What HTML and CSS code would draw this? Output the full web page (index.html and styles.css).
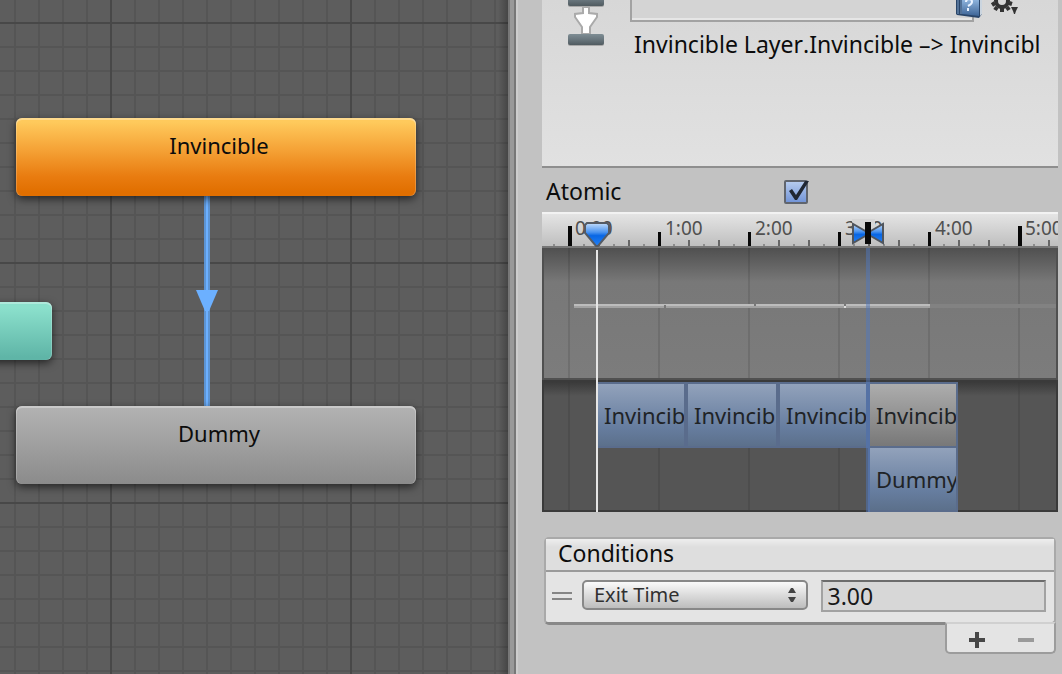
FILE: index.html
```html
<!DOCTYPE html>
<html lang="en">
<head>
<meta charset="utf-8">
<title>Animator</title>
<link rel="stylesheet" href="styles.css">
</head>
<body>
<main class="editor">
  <section class="graph" aria-label="State graph">
    <svg class="edge" width="22" height="212" viewBox="0 0 22 212" aria-hidden="true">
      <rect x="8" width="6" height="212" fill="#5d94d3"/>
      <rect x="10" width="2" height="212" fill="#6cb0ff"/>
      <path d="M0 94H22L13 115H9Z" fill="#6cb0ff"/>
    </svg>
    <div class="node node-any"></div>
    <div class="node node-default">Invincible</div>
    <div class="node node-state">Dummy</div>
  </section>

  <aside class="inspector">
    <header class="header">
      <svg class="transition-icon" width="40" height="48" viewBox="0 0 40 48" aria-hidden="true">
        <defs>
          <linearGradient id="bar" x2="0" y2="1"><stop stop-color="#7e8d94"/><stop offset=".5" stop-color="#69767d"/><stop offset="1" stop-color="#505b60"/></linearGradient>
        </defs>
        <rect x="2" y="-4" width="36" height="11" rx="2" fill="#777" opacity=".5"/>
        <rect x="2" y="-6" width="36" height="12" rx="2" fill="url(#bar)"/>
        <path d="M17 7V13L9 14V17L16 27V34H24V27L31 17V14L23 13V7Z" fill="#fff" stroke="#aaa" stroke-width="2"/>
        <rect x="2" y="36" width="36" height="10" rx="2" fill="#777" opacity=".5"/>
        <rect x="2" y="34" width="36" height="11" rx="2" fill="url(#bar)"/>
      </svg>
      <div class="header-main">
        <div class="name-row">
          <input class="name" type="text" aria-label="Transition name">
          <svg class="tools" width="66" height="22" viewBox="0 0 66 22" aria-hidden="true">
            <defs>
              <linearGradient id="book" x2="0" y2="1"><stop stop-color="#8db3dc"/><stop offset="1" stop-color="#3d6496"/></linearGradient>
            </defs>
            <path d="M3 0H29V14L26 18L4 15L3 14Z" fill="#294569"/>
            <path d="M9 0H26V16L9 14Z" fill="url(#book)"/>
            <path d="M5 0V14M8 0V14" stroke="#7fa0c7" stroke-width="1"/>
            <path d="M27 0H29V14L27 16Z" fill="#cbd5df"/>
            <path d="M13 2Q13 -1 16 -1T19 2Q19 4 15 6M15 8V11" fill="none" stroke="#e8f2ff" stroke-width="2"/>
            <circle cx="49" cy="1" r="6" fill="none" stroke="#333" stroke-width="4"/>
            <path d="M42 3L39 5M44 7L42 10M49 8V12M54 7L56 10M56 3L59 4" stroke="#333" stroke-width="4"/>
            <path d="M58 7H65L63 11L62 14H61L60 11Z" fill="#333"/>
          </svg>
        </div>
        <div class="title">Invincible Layer.Invincible –&gt; Invincible</div>
      </div>
    </header>

    <div class="property">
      <label for="atomic">Atomic</label>
      <span class="check">
        <input type="checkbox" id="atomic" checked>
        <svg width="28" height="26" viewBox="0 0 28 26" aria-hidden="true"><path d="M5 11L8 9L12 15L21 1H25L13 20H11Z" fill="#202733"/></svg>
      </span>
    </div>

    <div class="timeline">
      <div class="ruler">
        <div class="times"><span>0:00</span><span>1:00</span><span>2:00</span><span>3:00</span><span>4:00</span><span>5:00</span></div>
        <svg class="ticks" width="100%" height="34" aria-hidden="true">
          <defs>
            <pattern id="tick" x="24" width="90" height="34" patternUnits="userSpaceOnUse">
              <path d="M2 20H5V34H2Z" fill="#080808"/>
              <path d="M32 28h2v6h-2zM62 28h2v6h-2z" fill="#666"/>
              <path d="M17 32h2v2h-2zM47 32h2v2h-2zM77 32h2v2h-2z" fill="#8c8c8c"/>
            </pattern>
          </defs>
          <rect width="100%" height="34" fill="url(#tick)"/>
          <path d="M26 14h4v20h-4zM476 14h4v20h-4z" fill="#080808"/>
        </svg>
      </div>
      <div class="curve">
        <svg width="100%" height="130" aria-hidden="true">
          <path d="M384 58H516" stroke="#828282" stroke-width="4"/>
          <path d="M32 57H388" stroke="#bcbcbc" stroke-width="2"/>
          <path d="M32 59H388" stroke="#a2a2a2" stroke-width="2"/>
          <path d="M123 57v3M213 56v2" stroke="#777" stroke-width="2"/>
          <path d="M303 56v2" stroke="#777" stroke-width="2"/>
          <path d="M303 58v2" stroke="#ddd" stroke-width="2"/>
        </svg>
      </div>
      <div class="tracks">
        <div class="track">
          <div class="clip first">Invincible</div><div class="clip second">Invincible</div><div class="clip">Invincible</div><div class="clip off">Invincible</div>
        </div>
        <div class="track late"><div class="clip">Dummy</div></div>
      </div>
      <svg class="markers" width="100%" height="300" aria-hidden="true">
        <defs>
          <linearGradient id="pin" x2="0" y2="1"><stop stop-color="#c4ddfa"/><stop offset=".4" stop-color="#4b94f0"/><stop offset=".55" stop-color="#0866e4"/><stop offset="1" stop-color="#2380f5"/></linearGradient>
        </defs>
        <rect x="324" y="36" width="4" height="264" fill="#5078be" fill-opacity=".5"/>
        <rect x="54" y="38" width="2" height="262" fill="#e6e6e6"/>
        <path d="M45 11H65L67 13V21L56 34H54L43 21V13Z" fill="url(#pin)" stroke="#555b64" stroke-width="2"/>
        <rect x="310" y="7" width="23" height="18" fill="#d6d6d6"/>
        <path d="M311 12V31L325 23V20ZM341 12V31L327 23V20Z" fill="url(#pin)" stroke="#50565e" stroke-width="2"/>
        <rect x="323" y="10" width="6" height="22" fill="#090909"/>
      </svg>
    </div>

    <section class="conditions">
      <div class="list">
        <h2>Conditions</h2>
        <div class="condition">
          <span class="grip"></span>
          <span class="picker">
            <select aria-label="Condition"><option>Exit Time</option></select>
            <svg width="10" height="14" viewBox="0 0 10 14" aria-hidden="true"><path d="M1 5L4 0H6L9 5ZM1 9H9L6 14H4Z" fill="#444"/></svg>
          </span>
          <input class="value" type="text" value="3.00" aria-label="Exit time value">
        </div>
      </div>
      <div class="actions">
        <button type="button" aria-label="Add condition"><svg width="16" height="16"><path d="M0 6H6V0H10V6H16V10H10V16H6V10H0Z" fill="#474747"/></svg></button>
        <button type="button" aria-label="Remove condition"><svg width="16" height="16"><path d="M0 6H16V10H0Z" fill="#9a9a9a"/></svg></button>
      </div>
    </section>
  </aside>
</main>
</body>
</html>
```
FILE: styles.css
```css
* { box-sizing: border-box; }

body {
  margin: 0;
  font: 23px/30px "Noto Sans", "Open Sans", sans-serif;
  font-kerning: none;
  color: #0c0c0c;
  background: #c2c2c2;
}

svg { display: block; }

.editor {
  display: grid;
  grid-template-columns: minmax(0, 508fr) minmax(0, 554fr);
  min-height: 100vh;
  overflow: hidden;
}

/* State graph */
.graph {
  position: relative;
  overflow: hidden;
  background:
    linear-gradient(90deg, transparent, rgba(0, 0, 0, .25)) right / 10px 100% no-repeat,
    linear-gradient(90deg, #484848 2px, transparent 2px) 110px 0 / 240px 240px,
    linear-gradient(#484848 2px, transparent 2px) 0 22px / 240px 240px,
    linear-gradient(90deg, #555 2px, transparent 2px) 14px 0 / 24px 24px,
    linear-gradient(#555 2px, transparent 2px) 0 22px / 24px 24px,
    #5d5d5d;
}

.node {
  position: absolute;
  left: 16px;
  width: 400px;
  height: 78px;
  padding: 12px 0 0 6px;
  border-radius: 6px;
  font-size: 22px;
  text-align: center;
  box-shadow: 0 3px 8px rgba(0, 0, 0, .6), inset 0 2px rgba(255, 255, 255, .3), inset 1px 0 rgba(255, 255, 255, .2), inset -1px 0 rgba(255, 255, 255, .2);
}

.node-default {
  top: 118px;
  background: linear-gradient(#ffca5c 5%, #f5a337 40%, #e97c10 75%, #e16f00 95%);
}

.node-state {
  top: 406px;
  background: linear-gradient(#b3b3b3, #8b8b8b);
}

.node-any {
  top: 302px;
  left: -348px;
  height: 58px;
  background: linear-gradient(#8be0cc 10%, #5fb5a7 95%);
}

.edge {
  position: absolute;
  top: 196px;
  left: 196px;
}

/* Inspector */
.inspector {
  padding: 0 4px 0 34px;
  background: linear-gradient(90deg, #777 2px, #999 2px 6px, #777 6px 8px, #cdcdcd 8px 10px, #c2c2c2 10px);
}

.header {
  display: flex;
  height: 168px;
  padding-left: 24px;
  overflow: hidden;
  background: linear-gradient(#d7d7d7, #e1e1e1);
  border-bottom: 2px solid #8e8e8e;
}

.transition-icon { flex: none; }

.header-main {
  flex: 1;
  min-width: 0;
  padding: 0 17px 0 24px;
}

.name-row { display: flex; }

.name {
  flex: 1;
  min-width: 0;
  height: 22px;
  border: 2px solid #a2a2a2;
  border-top: 0;
  background: linear-gradient(#d4d4d4 18px, #e6e6e6 18px);
}

.tools {
  flex: none;
  margin: 0 22px 0 -21px;
  z-index: 1;
}

.title {
  padding: 7px 0 0 4px;
  overflow: hidden;
  white-space: nowrap;
}

.property {
  display: flex;
  align-items: center;
  height: 44px;
  padding: 4px 4px 0;
}

.property label {
  flex: 0 0 238px;
  padding-bottom: 2px;
}

.check { position: relative; }

.check input {
  display: block;
  appearance: none;
  width: 24px;
  height: 24px;
  margin: 0;
  border: 2px solid #60656e;
  border-radius: 2px;
  background: linear-gradient(#b5cbef, #7395d8);
}

.check svg {
  position: absolute;
  top: 0;
  left: 0;
}

/* Timeline */
.timeline {
  position: relative;
  overflow: hidden;
}

.ruler {
  position: relative;
  height: 36px;
  overflow: hidden;
  background: linear-gradient(#e4e4e4, #bfbfbf);
  border-top: 2px solid #f2f2f2;
  border-bottom: 2px solid #777;
}

.times {
  display: flex;
  padding-left: 33px;
  font-size: 19px;
  line-height: 28px;
  color: #505050;
}

.times span { flex: 0 0 90px; }

.ticks {
  position: absolute;
  top: -2px;
  left: 0;
}

.curve {
  height: 132px;
  background:
    linear-gradient(90deg, rgba(0, 0, 0, .1) 2px, transparent 2px) 26px 0 / 90px 100%,
    linear-gradient(#505050, #606060 14px, #787878 34px, #7c7c7c);
  border: solid #505050;
  border-width: 0 2px 2px 0;
  box-shadow: inset 2px 0 #505050;
}

.tracks {
  height: 132px;
  padding-top: 2px;
  background:
    linear-gradient(#363636, transparent 16px),
    linear-gradient(90deg, #4d4d4d 2px, transparent 2px) 26px 0 / 90px 100%,
    #555;
  box-shadow: inset 0 0 0 2px #3a3a3a;
}

.track {
  display: flex;
  padding-left: 56px;
  font-size: 22px;
}

.late { padding-left: 326px; }

.clip {
  flex: 0 0 90px;
  height: 66px;
  padding: 16px 0 0 6px;
  overflow: hidden;
  color: #202326;
  border: 2px solid #5a6c8c;
  background: linear-gradient(#92a2bb, #667d9f 70%, #5c708b);
}

.first { flex-basis: 88px; border-left: 0; }
.second { flex-basis: 92px; }
.off { background: linear-gradient(#adadad, #787878); }
.late .clip { border-top: 0; height: 64px; }

.markers {
  position: absolute;
  top: 0;
  left: 0;
}

/* Conditions */
.conditions { padding: 25px 2px 0; }

.list {
  border: 2px solid #a9a9a9;
  border-bottom: 3px solid #888;
  border-radius: 5px;
  background: #e4e4e4;
}

.conditions h2 {
  margin: 0;
  padding: 0 12px 2px;
  font-size: 23px;
  font-weight: 400;
  line-height: 29px;
  background: linear-gradient(#eee, #dedede 8px);
  border-bottom: 2px solid #9a9a9a;
}

.condition {
  display: flex;
  align-items: flex-start;
  padding: 8px 8px 10px 6px;
}

.grip {
  flex: 0 0 20px;
  height: 8px;
  margin: 12px 10px 0 0;
  border: solid #858585;
  border-width: 2px 0;
}

.picker {
  position: relative;
  flex: 1 1 200px;
  min-width: 0;
  margin-right: 13px;
}

.picker select {
  display: block;
  appearance: none;
  width: 100%;
  height: 30px;
  padding: 0 10px;
  font: 20px/24px "Noto Sans", "Open Sans", sans-serif;
  color: #303030;
  border: 2px solid #888;
  border-radius: 5px;
  background: linear-gradient(#fafafa, #bdbdbd);
}

.picker svg {
  position: absolute;
  top: 8px;
  right: 11px;
}

.value {
  flex: 1 1 200px;
  min-width: 0;
  height: 32px;
  padding: 0 5px 1px;
  font: inherit;
  color: #181818;
  border: 2px solid #a2a2a2;
  border-top-color: #6c6c6c;
  background: #d7d7d7;
}

.actions {
  position: relative;
  display: flex;
  justify-content: space-around;
  width: 111px;
  height: 32px;
  margin: -3px 0 0 auto;
  padding: 0 4px 0 5px;
  background: #e4e4e4;
  border: 2px solid #9c9c9c;
  border-top-color: #d0d0d0;
  border-radius: 0 0 5px 5px;
}

.actions button {
  display: flex;
  align-items: center;
  justify-content: center;
  width: 50px;
  padding: 3px 0 0;
  border: 0;
  background: none;
}
```
